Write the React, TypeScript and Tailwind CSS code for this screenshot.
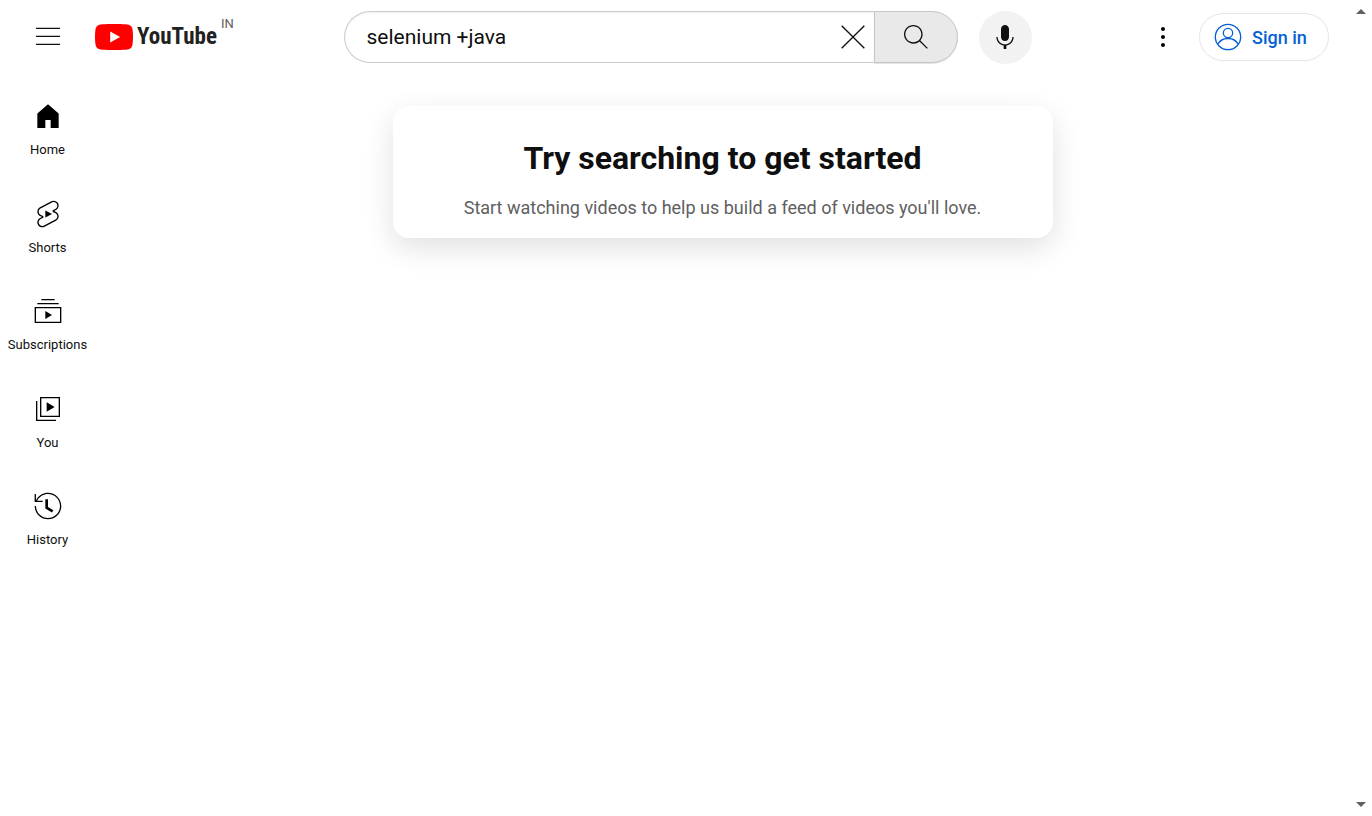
import { useState } from "react";

const ICONS = {
  menu: "M21 6H3V5h18v1zm0 5H3v1h18v-1zm0 6H3v1h18v-1z",
  close:
    "m12.71 12 8.15 8.15-.71.71L12 12.71l-8.15 8.15-.71-.71L11.29 12 3.15 3.85l.71-.71L12 11.29l8.15-8.15.71.71L12.71 12z",
  search:
    "m20.87 20.17-5.59-5.59C16.35 13.35 17 11.75 17 10c0-3.87-3.13-7-7-7s-7 3.13-7 7 3.13 7 7 7c1.75 0 3.35-.65 4.58-1.71l5.59 5.59.7-.71zM10 16c-3.31 0-6-2.69-6-6s2.69-6 6-6 6 2.69 6 6-2.69 6-6 6z",
  mic: "M12 3c-1.66 0-3 1.37-3 3.07v5.86c0 1.7 1.34 3.07 3 3.07s3-1.37 3-3.07V6.07C15 4.37 13.66 3 12 3zm6.5 9h-1c0 3.03-2.47 5.5-5.5 5.5S6.5 15.03 6.5 12h-1c0 3.24 2.39 5.93 5.5 6.41V21h2v-2.59c3.11-.48 5.5-3.17 5.5-6.41z",
  more: "M12 16.5c.83 0 1.5.67 1.5 1.5s-.67 1.5-1.5 1.5-1.5-.67-1.5-1.5.67-1.5 1.5-1.5zM10.5 12c0 .83.67 1.5 1.5 1.5s1.5-.67 1.5-1.5-.67-1.5-1.5-1.5-1.5.67-1.5 1.5zm0-6c0 .83.67 1.5 1.5 1.5s1.5-.67 1.5-1.5-.67-1.5-1.5-1.5-1.5.67-1.5 1.5z",
  home: "M4 21V10.08l8-6.96 8 6.96V21h-6v-6h-4v6H4z",
  shorts:
    "M10 14.65v-5.3L15 12l-5 2.65zm7.77-4.33-1.2-.5L18 9.06c1.84-.96 2.53-3.23 1.56-5.06s-3.24-2.53-5.07-1.56L6 6.94c-1.29.68-2.07 2.04-2 3.49.07 1.42.93 2.67 2.22 3.25.03.01 1.2.5 1.2.5L6 14.93c-1.83.97-2.53 3.24-1.56 5.07.97 1.83 3.24 2.53 5.07 1.56l8.5-4.5c1.29-.68 2.06-2.04 1.99-3.49-.07-1.42-.94-2.68-2.23-3.25zm-.23 5.86-8.5 4.5c-1.34.71-3.01.2-3.72-1.14-.71-1.34-.2-3.01 1.14-3.72l2.04-1.08v-1.21l-.69-.28-1.11-.46c-.99-.41-1.65-1.35-1.7-2.41-.05-1.06.52-2.06 1.46-2.56l8.5-4.5c1.34-.71 3.01-.2 3.72 1.14.71 1.34.2 3.01-1.14 3.72L15.5 9.26v1.21l1.8.74c.99.41 1.65 1.35 1.7 2.41.05 1.06-.52 2.06-1.46 2.56z",
  subscriptions:
    "M10 18v-6l5 3-5 3zm7-15H7v1h10V3zm3 3H4v1h16V6zm2 3H2v12h20V9zM3 10h18v10H3V10z",
  you: "m11 7 6 3.5-6 3.5V7zm7 13H4V6H3v15h15v-1zm3-2H6V3h15v15zM7 17h13V4H7v13z",
  history:
    "M14.97 16.95 10 13.87V7h2v5.76l4.03 2.49-1.06 1.7zM22 12c0 5.51-4.49 10-10 10S2 17.51 2 12h1c0 4.96 4.04 9 9 9s9-4.04 9-9-4.04-9-9-9C8.81 3 5.92 4.64 4.28 7.38c-.11.18-.22.37-.31.56L3.94 8H8v1H1.96V3h1v4.74c.04-.09.07-.17.11-.25.11-.22.23-.42.35-.63C5.22 3.86 8.51 2 12 2c5.51 0 10 4.49 10 10z",
};

function Icon({ name }: { name: keyof typeof ICONS }) {
  return (
    <svg viewBox="0 0 24 24" className="size-8 shrink-0" fill="currentColor" aria-hidden="true">
      <path d={ICONS[name]} />
    </svg>
  );
}

function Logo() {
  return (
    <a href="#home" aria-label="YouTube Home" className="flex items-start">
      <span className="flex items-center gap-1">
        <svg viewBox="0 0 28 20" className="h-[26px] w-[38px]" preserveAspectRatio="none" aria-hidden="true">
          <path
            fill="#f00"
            d="M27.4 3.1A3.6 3.6 0 0 0 24.9.6C22.7 0 14 0 14 0S5.3 0 3.1.6A3.6 3.6 0 0 0 .6 3.1C0 5.3 0 10 0 10s0 4.700.6 6.900a3.6 3.6 0 0 0 2.5 2.5C5.3 20 14 20 14 20s8.7 0 10.9-.6a3.6 3.6 0 0 0 2.5-2.5C28 14.7 28 10 28 10s0-4.7-.6-6.9z"
          />
          <path fill="#fff" d="M11.2 14.3 18.5 10l-7.3-4.3z" />
        </svg>
        <span className="font-['Roboto_Condensed','Liberation_Sans_Narrow',Roboto,sans-serif] text-[23px] leading-[26px] font-bold text-[#212121]">
          YouTube
        </span>
      </span>
      <span className="-mt-2 ml-1 text-[13px] leading-4 text-[#606060]">IN</span>
    </a>
  );
}

const NAV: { label: string; icon: keyof typeof ICONS }[] = [
  { label: "Home", icon: "home" },
  { label: "Shorts", icon: "shorts" },
  { label: "Subscriptions", icon: "subscriptions" },
  { label: "You", icon: "you" },
  { label: "History", icon: "history" },
];

export default function App() {
  const [query, setQuery] = useState("selenium +java");

  return (
    <div className="flex min-h-screen bg-white font-[Roboto,'Liberation_Sans',sans-serif] text-[#0f0f0f]">
      <div className="min-w-0 flex-1">
        <header className="flex h-[74px] items-center justify-between pr-[21px] pl-8">
          <div className="flex w-[230px] shrink-0 items-center gap-[31px]">
            <button type="button" aria-label="Guide">
              <Icon name="menu" />
            </button>
            <Logo />
          </div>

          <div className="flex max-w-[688px] flex-1 items-center gap-[21px]">
            <form
              role="search"
              className="flex h-[52px] min-w-0 flex-1"
              onSubmit={(e) => e.preventDefault()}
            >
              <div className="flex min-w-0 flex-1 items-center rounded-l-full border border-r-0 border-[#ccc] pr-[5px] pl-[22px] shadow-[inset_0_1px_2px_#eee]">
                <input
                  type="text"
                  aria-label="Search"
                  value={query}
                  onChange={(e) => setQuery(e.target.value)}
                  className="min-w-0 flex-1 bg-transparent text-[21px] leading-8 outline-none"
                />
                <button type="button" aria-label="Clear search" onClick={() => setQuery("")}>
                  <Icon name="close" />
                </button>
              </div>
              <button
                type="submit"
                aria-label="Search"
                className="flex w-[84px] items-center justify-center rounded-r-full border border-[#c6c6c6] bg-[#e9e9e9] shadow-[0_1px_0_rgba(0,0,0,0.1)]"
              >
                <Icon name="search" />
              </button>
            </form>
            <button
              type="button"
              aria-label="Search with your voice"
              className="flex size-[53px] shrink-0 items-center justify-center rounded-full bg-[#f2f2f2]"
            >
              <Icon name="mic" />
            </button>
          </div>

          <div className="flex w-[216px] shrink-0 items-center justify-end gap-5 text-black">
            <button type="button" aria-label="Settings">
              <Icon name="more" />
            </button>
            <a
              href="#sign-in"
              className="flex h-12 w-[130px] shrink-0 items-center gap-2 rounded-full border border-[#e5e5e5] pl-3 text-[18px] font-medium text-[#065fd4]"
            >
              <svg
                viewBox="0 0 24 24"
                className="size-8 shrink-0"
                fill="none"
                stroke="currentColor"
                aria-hidden="true"
              >
                <circle cx="12" cy="12" r="9.5" />
                <circle cx="12" cy="9" r="3.5" />
                <path d="M4.3 17.6C5.8 14.5 8.6 13.1 12 13.1s6.2 1.4 7.7 4.5" />
              </svg>
              <span>Sign in</span>
            </a>
          </div>
        </header>

        <div className="flex">
          <nav aria-label="Guide" className="mt-[5px] grid h-[488px] w-[95px] shrink-0 grid-rows-5">
            {NAV.map((item) => (
              <a
                key={item.label}
                href={"#" + item.label.toLowerCase()}
                className="flex flex-col items-center gap-[10px] pt-[21px] text-[13px] leading-4"
              >
                <span className="text-black">
                  <Icon name={item.icon} />
                </span>
                <span>{item.label}</span>
              </a>
            ))}
          </nav>

          <main className="flex flex-1 justify-center pt-8">
            <section className="h-fit w-full max-w-[660px] rounded-2xl bg-white px-8 pt-8 pb-4 text-center shadow-[0_10px_30px_rgba(0,0,0,0.12)]">
              <h1 className="text-[32px] leading-10 font-bold">Try searching to get started</h1>
              <p className="mt-4 text-[18px] leading-7 text-[#606060]">
                Start watching videos to help us build a feed of videos you'll love.
              </p>
            </section>
          </main>
        </div>
      </div>

      <div
        aria-hidden="true"
        className="flex w-[22px] shrink-0 flex-col items-center justify-between py-[9px]"
      >
        <svg viewBox="0 0 10 5" className="h-[5px] w-[10px]" fill="#606060">
          <path d="M5 0 10 5H0z" />
        </svg>
        <svg viewBox="0 0 10 5" className="h-[5px] w-[10px]" fill="#606060">
          <path d="M0 0H10L5 5z" />
        </svg>
      </div>
    </div>
  );
}
